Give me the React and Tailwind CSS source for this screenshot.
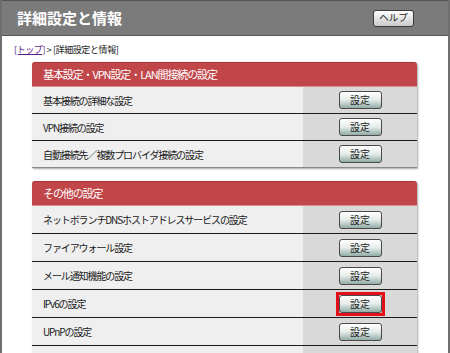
import React from "react";

const basicRows = [
  "基本接続の詳細な設定",
  "VPN接続の設定",
  "自動接続先／複数プロバイダ接続の設定",
];

const otherRows = [
  "ネットボランチDNSホストアドレスサービスの設定",
  "ファイアウォール設定",
  "メール通知機能の設定",
  "IPv6の設定",
  "UPnPの設定",
];

function SetButton() {
  return (
    <button className="w-[43px] h-[18px] rounded-[3px] border border-[#4a4a4a] bg-gradient-to-b from-white via-[#e4ecea] to-[#93aca6] text-[10px] leading-none text-[#222] shadow-[inset_0_1px_0_#fff]">
      設定
    </button>
  );
}

function Row({ label, tall, active, last }) {
  return (
    <div
      className={
        "flex " +
        (tall ? "h-[28px] " : "h-[27px] ") +
        (last ? "border-b border-[#8a8a8a]" : "border-b border-[#1c1c1c]")
      }
    >
      <div className="flex-1 bg-[#efefef] pl-[11px] flex items-center text-[10px] tracking-[-1.1px] text-[#1a1a1a]">
        {label}
      </div>
      <div className="w-[114px] bg-[#d9d9d9] flex items-center justify-center">
        {active ? (
          <span className="-m-[3px] border-[3px] border-[#e3101a] flex">
            <SetButton />
          </span>
        ) : (
          <SetButton />
        )}
      </div>
    </div>
  );
}

function Section({ title, children }) {
  return (
    <div className="w-[385px] rounded-t-[3px] bg-[#efefef] shadow-[1px_1px_2px_rgba(0,0,0,0.35)]">
      <div className="h-[25px] rounded-t-[3px] bg-[#c1464a] border-t border-[#a83438] border-b border-b-[#d88d8f] pl-[11px] flex items-center text-[11px] tracking-[-1.1px] text-white">
        {title}
      </div>
      {children}
    </div>
  );
}

export default function App() {
  return (
    <div
      className="w-[450px] h-[353px] overflow-hidden bg-white border-x-2 border-[#6e6e6e]"
      style={{ fontFamily: '"Noto Sans CJK JP", "Noto Sans", sans-serif' }}
    >
      {/* title bar */}
      <div className="h-[36px] bg-[#7b7b7b] border-y border-[#555] flex items-center justify-between pl-[15px] pr-[34px]">
        <h1 className="text-[15px] font-bold text-white">詳細設定と情報</h1>
        <button className="w-[41px] h-[17px] rounded-[3px] border border-[#3c3c3c] bg-gradient-to-b from-white to-[#c9c9c9] text-[9.5px] leading-none text-[#222]">
          ヘルプ
        </button>
      </div>

      {/* breadcrumb */}
      <div className="pl-3 pt-[7px] h-[26px] text-[9px] tracking-[-0.4px] text-[#222]">
        <a className="text-[#5a1a8a] underline">[トップ]</a> &gt; [詳細設定と情報]
      </div>

      <div className="pl-[30px] flex flex-col gap-[13px]">
        <Section title="基本設定・VPN設定・LAN間接続の設定">
          {basicRows.map((r, i) => (
            <Row key={r} label={r} last={i === basicRows.length - 1} />
          ))}
        </Section>

        <Section title="その他の設定">
          {otherRows.map((r) => (
            <Row key={r} label={r} tall active={r === "IPv6の設定"} />
          ))}
          {/* next row, cut off by the window */}
          <div className="flex h-[28px]">
            <div className="flex-1 bg-[#efefef]" />
            <div className="w-[114px] bg-[#d9d9d9]" />
          </div>
        </Section>
      </div>
    </div>
  );
}
